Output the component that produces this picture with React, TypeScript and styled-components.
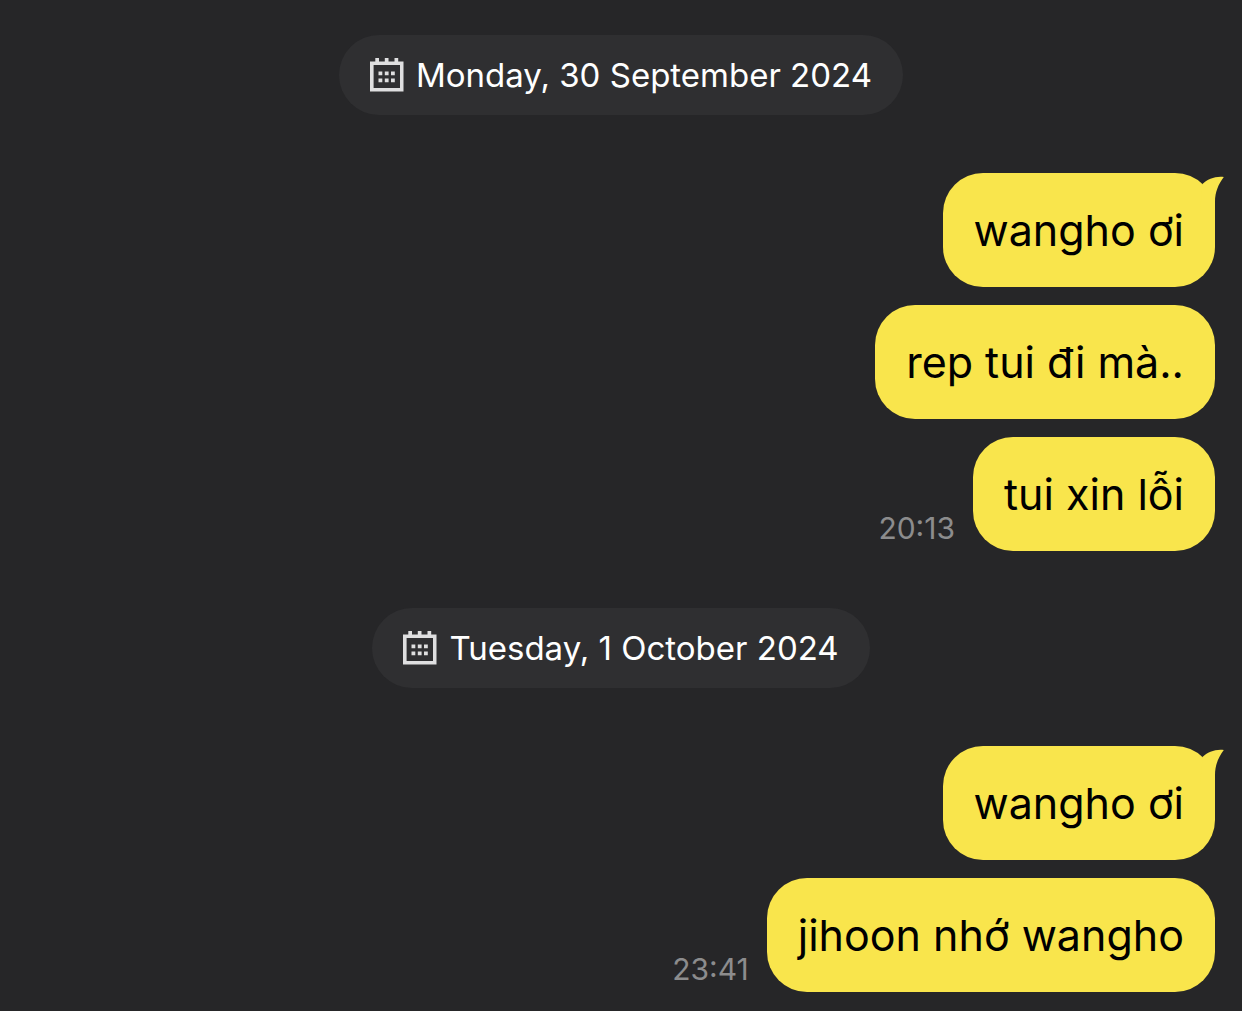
import React from "react";
import styled, { createGlobalStyle } from "styled-components";

const GlobalStyle = createGlobalStyle`
  body {
    margin: 0;
    background: #262628;
    font-family: Inter, "Noto Sans", sans-serif;
  }
`;

const Chat = styled.main`
  display: flex;
  flex-direction: column;
  padding: 35px 27px 19px;
  gap: 57px;
`;

const Day = styled.section`
  display: flex;
  flex-direction: column;
  gap: 58px;
`;

const DatePill = styled.h2`
  display: flex;
  align-items: center;
  align-self: center;
  gap: 12px;
  box-sizing: border-box;
  height: 80px;
  margin: 0;
  padding: 0 31px;
  border-radius: 40px;
  background: #2f2f31;
  color: #ffffff;
  font-size: 33px;
  font-weight: 400;
  line-height: 42px;
  white-space: nowrap;
`;

const Messages = styled.ol`
  display: flex;
  flex-direction: column;
  gap: 18px;
  margin: 0;
  padding: 0;
  list-style: none;
`;

const MessageRow = styled.li`
  display: flex;
  justify-content: flex-end;
  align-items: flex-end;
  gap: 18px;
`;

const Time = styled.time`
  padding-bottom: 5px;
  color: #8c8c8d;
  font-size: 30px;
  line-height: 36px;
`;

const Bubble = styled.p`
  position: relative;
  margin: 0;
  padding: 30px 31px;
  border-radius: 40px;
  background: #f9e54c;
  color: #000000;
  font-size: 43px;
  line-height: 54px;
`;

const Tail = styled.svg`
  position: absolute;
  top: 0;
  right: -9px;
  display: block;
`;

const CalendarIcon = () => (
  <svg width="34" height="34" viewBox="0 0 34 34" fill="#dfdfe0" aria-hidden="true">
    <path fillRule="evenodd" d="M0 3.5H5.3V0H9V3.5H14.8V0H18.5V3.5H24.5V0H28.2V3.5H33.5V33.5H0ZM3.6 7V30H30V7Z" />
    <path d="M8.5 13.5h3.8v3.8h-3.8zM14.8 13.5h3.8v3.8h-3.8zM21 13.5h3.8v3.8H21zM8.5 20.4h3.8v3.8h-3.8zM14.8 20.4h3.8v3.8h-3.8zM21 20.4h3.8v3.8H21z" />
  </svg>
);

const BubbleTail = () => (
  <Tail width="34" height="40" viewBox="0 0 34 40" fill="#f9e54c" aria-hidden="true">
    <path d="M12.5 11C17.5 6 25.5 3 33.8 4C28.5 11 25 19 25 29V40H10Z" />
  </Tail>
);

type Message = { text: string; time?: string };

const days: { date: string; label: string; messages: Message[] }[] = [
  {
    date: "2024-09-30",
    label: "Monday, 30 September 2024",
    messages: [{ text: "wangho ơi" }, { text: "rep tui đi mà.." }, { text: "tui xin lỗi", time: "20:13" }],
  },
  {
    date: "2024-10-01",
    label: "Tuesday, 1 October 2024",
    messages: [{ text: "wangho ơi" }, { text: "jihoon nhớ wangho", time: "23:41" }],
  },
];

export default function App() {
  return (
    <>
      <GlobalStyle />
      <Chat>
        {days.map((day) => (
          <Day key={day.date}>
            <DatePill>
              <CalendarIcon />
              <time dateTime={day.date}>{day.label}</time>
            </DatePill>
            <Messages>
              {day.messages.map((message, index) => (
                <MessageRow key={message.text}>
                  {message.time && <Time>{message.time}</Time>}
                  <Bubble>
                    {message.text}
                    {index === 0 && <BubbleTail />}
                  </Bubble>
                </MessageRow>
              ))}
            </Messages>
          </Day>
        ))}
      </Chat>
    </>
  );
}
